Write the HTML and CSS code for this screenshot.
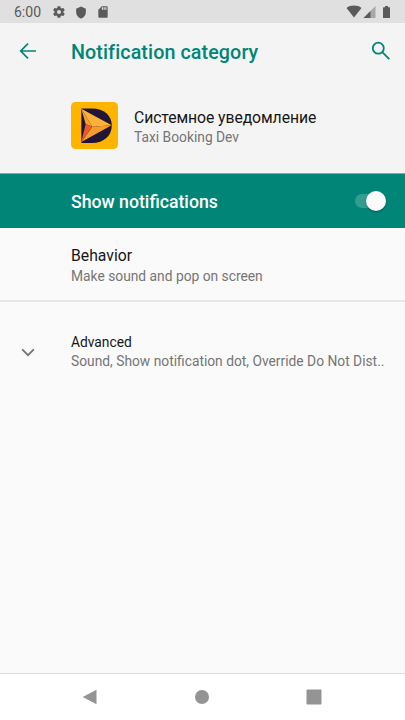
FILE: index.html
```
<!DOCTYPE html>
<html lang="en">
<head>
<meta charset="utf-8">
<title>Notification category</title>
<link rel="stylesheet" href="styles.css">
</head>
<body>
<div class="screen">
  <div class="status">
    <span class="clock">6:00</span>
    <svg class="st gear" viewBox="0 0 24 24"><path d="M19.4 13a7.500 7.500 0 0 0 0-2l2.100-1.600c.2-.2.300-.4.100-.7l-2-3.400c-.1-.2-.4-.3-.6-.2l-2.500 1a7 7 0 0 0-1.700-1l-.4-2.600c0-.3-.2-.5-.5-.5h-4c-.3 0-.5.2-.5.500L9 5.100a8 8 0 0 0-1.700 1l-2.500-1c-.2-.1-.5 0-.6.2l-2 3.400c-.1.300-.1.500.1.700L4.500 11a8 8 0 0 0 0 2l-2.200 1.600c-.2.200-.2.400-.1.700l2 3.400c.1.200.4.300.6.200l2.500-1a7 7 0 0 0 1.700 1l.4 2.600c0 .3.200.5.500.5h4c.3 0 .5-.2.500-.5l.4-2.600a7 7 0 0 0 1.700-1l2.500 1c.2.100.5 0 .6-.2l2-3.400c.2-.3.100-.5-.1-.7zM12 15.500a3.500 3.500 0 1 1 0-7 3.500 3.500 0 0 1 0 7z"/></svg>
    <svg class="st shield" viewBox="0 0 24 24"><path d="M12 1 3 5v6c0 5.550 3.840 10.740 9 12 5.160-1.260 9-6.450 9-12V5z"/></svg>
    <svg class="st card" viewBox="0 0 24 24"><path d="M18 2h-8L4 8v12c0 1.100.9 2 2 2h12c1.100 0 2-.9 2-2V4c0-1.100-.9-2-2-2zm-6 6h-2V4h2zm3 0h-2V4h2zm3 0h-2V4h2z"/></svg>
    <svg class="radio" viewBox="0 0 46 14">
      <path d="M.5 3C4.500-.2 11.500-.2 15.500 3L8 12.500z"/>
      <path d="M17.500 13H29.500V1z" opacity=".42"/><path d="M17.500 13H24.500V6z"/>
      <path d="M39 1h3v1.300h1.400q.6 0 .6.600v9.500q0 .6-.6.600h-5.800q-.6 0-.6-.6V2.900q0-.6.600-.6H39z"/>
    </svg>
  </div>
  <header class="bar">
    <svg class="back" viewBox="0 0 18 18"><path d="M17 9H2M9 1.700 1.700 9 9 16.300"/></svg>
    <h1><span>Notification category</span></h1>
    <svg class="search" viewBox="0 0 20 20"><circle cx="7.300" cy="7.200" r="5.500"/><path d="m11.300 11.200 7 7"/></svg>
  </header>
  <section class="app">
    <svg class="logo" viewBox="0 0 47 47">
      <rect width="47" height="47" rx="4.500" fill="#ffb400"/>
      <path d="M10.300 6.500H21C33 6.500 40.800 13.500 40.800 23.500S33 41 21 41H10.300z" fill="#211538"/>
      <path d="M10.300 6.800 40.700 23.200 21.300 24.800z" fill="#ffb038"/>
      <path d="M21.300 24.800 40.700 23.200 10.300 40z" fill="#f59c2a"/>
      <path d="M10.300 6.800 21.300 24.800 14.700 22z" fill="#f9a02c"/>
      <path d="M14.700 22 21.300 24.800 10.300 40z" fill="#ea5a2b"/>
    </svg>
    <div class="lines"><p class="t cyr">Системное уведомление</p><p class="s pkg">Taxi Booking Dev</p></div>
  </section>
  <section class="toggle"><span>Show notifications</span><i class="switch"></i></section>
  <section class="row behavior"><p class="t">Behavior</p><p class="s">Make sound and pop on screen</p></section>
  <section class="row advanced">
    <svg class="chev" viewBox="0 0 14 9"><path d="m1.200 1.300 5.800 5.900 5.800-5.900"/></svg>
    <div><p class="t small">Advanced</p><p class="s adv">Sound, Show notification dot, Override Do Not Dist..</p></div>
  </section>
  <nav>
    <svg viewBox="0 0 16 16"><path d="M14.500.7v14.600L.7 8z"/></svg>
    <svg viewBox="0 0 16 16"><circle cx="8" cy="8" r="7"/></svg>
    <svg viewBox="0 0 16 16"><rect x=".5" y=".5" width="15" height="15" rx="1"/></svg>
  </nav>
</div>
</body>
</html>
```
FILE: styles.css
```
* { box-sizing: border-box; margin: 0; padding: 0; }
body { font-family: Roboto, "Noto Sans", sans-serif; background: #fafafa; }
svg { display: block; flex: none; }
.screen { width: 405px; height: 720px; display: flex; flex-direction: column; overflow: hidden; }
.status { height: 23px; background: #e0e0e0; display: flex; align-items: center; padding: 1px 13px 0 14px; color: #5a5a5a; }
.clock { font-size: 14px; width: 38px; }
.st { fill: #5a5a5a; height: 14px; width: 14px; }
.shield { margin-left: 8px; height: 13px; }
.card { margin-left: 7.500px; }
.radio { width: 46px; height: 14px; margin-left: auto; fill: #5a5a5a; }
.bar { height: 57px; background: #f4f4f4; display: flex; align-items: center; padding: 0 14px 0 19px; }
.back { width: 18px; height: 18px; margin-top: -1px; fill: none; stroke: #008577; stroke-width: 1.7; }
.bar h1 { flex: 1; margin: 2px 0 0 34px; font-size: 19.7px; font-weight: 500; letter-spacing: .1px; color: #008577; line-height: 24px; white-space: nowrap; }
.search { width: 20px; height: 20px; margin-top: -1px; fill: none; stroke: #008577; stroke-width: 1.8; }
.app { height: 94px; background: #f4f4f4; display: flex; padding: 22px 0 0 71px; border-bottom: 1px solid #73b5ae; }
.logo { width: 47px; height: 47px; margin-top: .4px; }
.lines { margin: 5px 0 0 16px; }
.t { font-size: 15.75px; line-height: 21px; color: #161616; white-space: nowrap; }
.cyr { letter-spacing: -.08px; }
.s { font-size: 13.8px; line-height: 19px; color: #757575; white-space: nowrap; }
.toggle { height: 54px; background: #008577; display: flex; align-items: center; justify-content: space-between; padding: 0 19px 0 71px; color: #fff; font-size: 17.7px; font-weight: 500; }
.toggle span { margin-top: 2px; }
.switch { width: 31px; height: 14px; display: flex; align-items: center; justify-content: flex-end; background: #339d92; border-radius: 7px; }
.switch::after { content: ""; flex: none; width: 20px; height: 20px; border-radius: 50%; background: #fafafa; box-shadow: 0 1px 2px #0005; }
.row { background: #fafafa; }
.behavior { height: 74px; padding: 17px 0 0 71px; border-bottom: 2px solid #e6e6e6; }
.behavior .s { margin-top: 1px; }
.advanced { flex: 1; display: flex; padding: 31px 0 0 21px; }
.chev { width: 14px; height: 9px; margin: 15px 36px 0 0; fill: none; stroke: #757575; stroke-width: 1.9; }
.small { font-size: 13.8px; line-height: 19px; }
nav { height: 47px; border-top: 1px solid #dcdcdc; background: #fff; display: flex; align-items: center; justify-content: space-between; padding: 0 83px 1px 82px; }
nav svg { width: 16px; height: 16px; fill: #949494; }
```
